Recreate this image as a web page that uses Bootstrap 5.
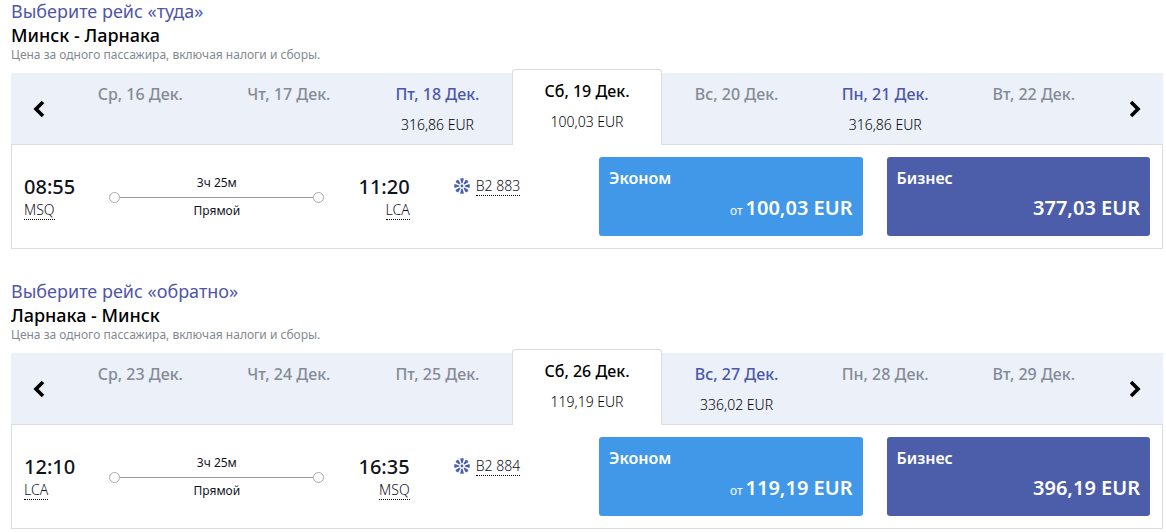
<!DOCTYPE html>
<html lang="ru">
<head>
<meta charset="utf-8">
<meta name="viewport" content="width=device-width, initial-scale=1">
<title>Выбор рейса</title>
<link href="https://cdn.jsdelivr.net/npm/bootstrap@5.3.0/dist/css/bootstrap.min.css" rel="stylesheet">
<style>
  body { font-family: "Noto Sans", "Open Sans", sans-serif; font-size: 14px; color: #10131c; background: #fff; }
  .page { padding: 0 3px 0 11px; }
  .direction { margin-bottom: 31px; }
  .direction h2 { font-size: 18px; line-height: 23px; font-weight: 400; color: #4f56a6; }
  .direction h3 { font-size: 18px; line-height: 24px; font-weight: 500; color: #000; }
  .note { font-size: 12px; line-height: 16px; color: #83898f; font-weight: 400; margin-bottom: 10px; }
  .dates { background: #ebf0f9; height: 72px; }
  .arrow { width: 55px; border-bottom: 1px solid #d9dce0; }
  .arrow svg { display: block; margin: 0 auto; }
  .day { flex: 1 1 0; padding: 9px 0 0; border-bottom: 1px solid #d9dce0; color: #000; }
  .day-name { font-size: 16px; line-height: 24px; font-weight: 500; color: #858a95; }
  .day-price { font-size: 14px; line-height: 20px; font-weight: 300; margin-top: 9px; }
  .day.priced .day-name { color: #4a57a8; }
  .day.current { background: #fff; border: 1px solid #d9dce0; border-bottom: 0; border-radius: 3px 3px 0 0; margin-top: -4px; }
  .day.current .day-name { color: #000; }
  .flight { border: 1px solid #d9dce0; border-top: 0; padding: 12px 0; }
  .route { width: 70%; margin-right: 44px; padding-top: 18px; }
  .time { font-size: 20px; line-height: 24px; font-weight: 500; margin-bottom: 2px; }
  .code { font-size: 14px; line-height: 18px; font-weight: 300; color: #10131c; border-bottom: 1px dotted #000; }
  .leg { margin: 0 34px; font-size: 12px; line-height: 16px; }
  .track { height: 12px; }
  .stop { width: 11px; height: 11px; border: 1px solid #aaa; border-radius: 50%; }
  .rail { height: 1px; background: #999; }
  .number { padding-top: 20px; gap: 6px; }
  .fare { height: 79px; border-radius: 3px; padding: 9px 10px; color: #fff; }
  .economy { background: #4197e8; }
  .business { background: #4c5da9; }
  .fare-name { font-size: 16px; line-height: 24px; font-weight: 600; }
  .fare-price { font-size: 20px; line-height: 28px; font-weight: 600; margin-top: 4px; }
  .from { font-size: 12px; font-weight: 400; margin-right: 3px; }
</style>
</head>
<body>
<svg class="d-none" xmlns="http://www.w3.org/2000/svg">
  <symbol id="snow" viewBox="-8 -8 16 16">
    <g fill="#4a5fb4">
      <circle r="1.4"/>
      <g id="ray4">
        <path id="ray" d="M-.6-2.8-1.9-7.4Q0-8.2 1.9-7.4L.6-2.8z"/>
        <use href="#ray" transform="rotate(45)"/><use href="#ray" transform="rotate(90)"/><use href="#ray" transform="rotate(135)"/>
      </g>
      <use href="#ray4" transform="rotate(180)"/>
    </g>
  </symbol>
  <symbol id="prev" viewBox="0 0 12 18"><path d="M10 2 3 9l7 7" fill="none" stroke="#000" stroke-width="3.6"/></symbol>
  <symbol id="next" viewBox="0 0 12 18"><path d="M1 2l7 7-7 7" fill="none" stroke="#000" stroke-width="3.6"/></symbol>
</svg>
<main class="page">
  <section class="direction">
    <h2 class="m-0">Выберите рейс «туда»</h2>
    <h3 class="m-0">Минск - Ларнака</h3>
    <p class="note">Цена за одного пассажира, включая налоги и сборы.</p>
    <div class="dates d-flex">
      <button class="arrow btn rounded-0 border-top-0 border-start-0 border-end-0 p-0" aria-label="Раньше"><svg width="12" height="18"><use href="#prev"/></svg></button>
      <button class="day btn rounded-0 border-top-0 border-start-0 border-end-0 d-flex flex-column align-items-center"><span class="day-name">Ср, 16 Дек.</span></button>
      <button class="day btn rounded-0 border-top-0 border-start-0 border-end-0 d-flex flex-column align-items-center"><span class="day-name">Чт, 17 Дек.</span></button>
      <button class="day priced btn rounded-0 border-top-0 border-start-0 border-end-0 d-flex flex-column align-items-center"><span class="day-name">Пт, 18 Дек.</span><span class="day-price">316,86 EUR</span></button>
      <button class="day current btn d-flex flex-column align-items-center"><span class="day-name">Сб, 19 Дек.</span><span class="day-price">100,03 EUR</span></button>
      <button class="day btn rounded-0 border-top-0 border-start-0 border-end-0 d-flex flex-column align-items-center"><span class="day-name">Вс, 20 Дек.</span></button>
      <button class="day priced btn rounded-0 border-top-0 border-start-0 border-end-0 d-flex flex-column align-items-center"><span class="day-name">Пн, 21 Дек.</span><span class="day-price">316,86 EUR</span></button>
      <button class="day btn rounded-0 border-top-0 border-start-0 border-end-0 d-flex flex-column align-items-center"><span class="day-name">Вт, 22 Дек.</span></button>
      <button class="arrow btn rounded-0 border-top-0 border-start-0 border-end-0 p-0" aria-label="Позже"><svg width="12" height="18"><use href="#next"/></svg></button>
    </div>
    <div class="flight">
      <div class="row m-0">
        <div class="col-6 d-flex align-items-start">
          <div class="route d-flex">
            <div class="d-flex flex-column align-items-start"><span class="time">08:55</span><a href="#" class="code text-decoration-none">MSQ</a></div>
            <div class="leg flex-fill text-center">
              <div>3ч 25м</div>
              <div class="track d-flex align-items-center"><span class="stop"></span><span class="rail flex-fill"></span><span class="stop"></span></div>
              <div>Прямой</div>
            </div>
            <div class="d-flex flex-column align-items-end"><span class="time">11:20</span><a href="#" class="code text-decoration-none">LCA</a></div>
          </div>
          <div class="number d-flex"><svg width="16" height="18"><use href="#snow"/></svg><a href="#" class="code text-decoration-none">B2 883</a></div>
        </div>
        <div class="col-3"><button class="fare economy btn border-0 w-100 d-flex flex-column align-items-start"><span class="fare-name">Эконом</span><span class="fare-price align-self-end"><span class="from">от</span>100,03 EUR</span></button></div>
        <div class="col-3"><button class="fare business btn border-0 w-100 d-flex flex-column align-items-start"><span class="fare-name">Бизнес</span><span class="fare-price align-self-end">377,03 EUR</span></button></div>
      </div>
    </div>
  </section>
  <section class="direction mb-0">
    <h2 class="m-0">Выберите рейс «обратно»</h2>
    <h3 class="m-0">Ларнака - Минск</h3>
    <p class="note">Цена за одного пассажира, включая налоги и сборы.</p>
    <div class="dates d-flex">
      <button class="arrow btn rounded-0 border-top-0 border-start-0 border-end-0 p-0" aria-label="Раньше"><svg width="12" height="18"><use href="#prev"/></svg></button>
      <button class="day btn rounded-0 border-top-0 border-start-0 border-end-0 d-flex flex-column align-items-center"><span class="day-name">Ср, 23 Дек.</span></button>
      <button class="day btn rounded-0 border-top-0 border-start-0 border-end-0 d-flex flex-column align-items-center"><span class="day-name">Чт, 24 Дек.</span></button>
      <button class="day btn rounded-0 border-top-0 border-start-0 border-end-0 d-flex flex-column align-items-center"><span class="day-name">Пт, 25 Дек.</span></button>
      <button class="day current btn d-flex flex-column align-items-center"><span class="day-name">Сб, 26 Дек.</span><span class="day-price">119,19 EUR</span></button>
      <button class="day priced btn rounded-0 border-top-0 border-start-0 border-end-0 d-flex flex-column align-items-center"><span class="day-name">Вс, 27 Дек.</span><span class="day-price">336,02 EUR</span></button>
      <button class="day btn rounded-0 border-top-0 border-start-0 border-end-0 d-flex flex-column align-items-center"><span class="day-name">Пн, 28 Дек.</span></button>
      <button class="day btn rounded-0 border-top-0 border-start-0 border-end-0 d-flex flex-column align-items-center"><span class="day-name">Вт, 29 Дек.</span></button>
      <button class="arrow btn rounded-0 border-top-0 border-start-0 border-end-0 p-0" aria-label="Позже"><svg width="12" height="18"><use href="#next"/></svg></button>
    </div>
    <div class="flight">
      <div class="row m-0">
        <div class="col-6 d-flex align-items-start">
          <div class="route d-flex">
            <div class="d-flex flex-column align-items-start"><span class="time">12:10</span><a href="#" class="code text-decoration-none">LCA</a></div>
            <div class="leg flex-fill text-center">
              <div>3ч 25м</div>
              <div class="track d-flex align-items-center"><span class="stop"></span><span class="rail flex-fill"></span><span class="stop"></span></div>
              <div>Прямой</div>
            </div>
            <div class="d-flex flex-column align-items-end"><span class="time">16:35</span><a href="#" class="code text-decoration-none">MSQ</a></div>
          </div>
          <div class="number d-flex"><svg width="16" height="18"><use href="#snow"/></svg><a href="#" class="code text-decoration-none">B2 884</a></div>
        </div>
        <div class="col-3"><button class="fare economy btn border-0 w-100 d-flex flex-column align-items-start"><span class="fare-name">Эконом</span><span class="fare-price align-self-end"><span class="from">от</span>119,19 EUR</span></button></div>
        <div class="col-3"><button class="fare business btn border-0 w-100 d-flex flex-column align-items-start"><span class="fare-name">Бизнес</span><span class="fare-price align-self-end">396,19 EUR</span></button></div>
      </div>
    </div>
  </section>
</main>
<script src="https://cdn.jsdelivr.net/npm/bootstrap@5.3.0/dist/js/bootstrap.bundle.min.js"></script>
</body>
</html>
